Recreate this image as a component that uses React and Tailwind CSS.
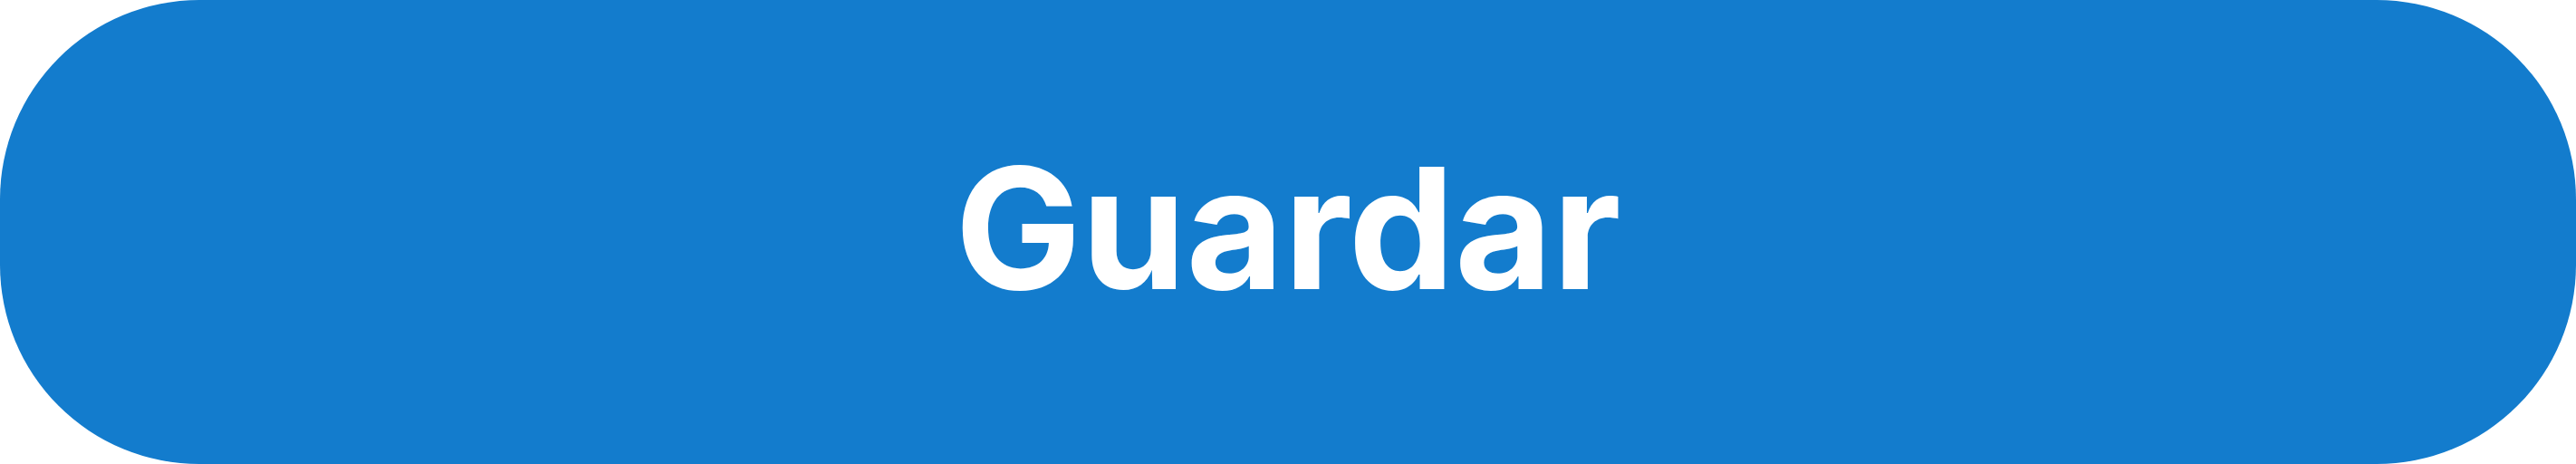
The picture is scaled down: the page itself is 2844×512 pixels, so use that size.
export default function App() {
  return (
    <div className="w-[2844px] h-[512px] bg-white">
      <button
        type="button"
        className="flex h-[512px] w-[2844px] items-center justify-center rounded-[220px] bg-[#137ccd] text-white"
        style={{ fontFamily: 'Inter, "Liberation Sans", Arial, sans-serif' }}
      >
        <span className="pb-[9px] text-[186px] font-bold leading-none">Guardar</span>
      </button>
    </div>
  );
}
